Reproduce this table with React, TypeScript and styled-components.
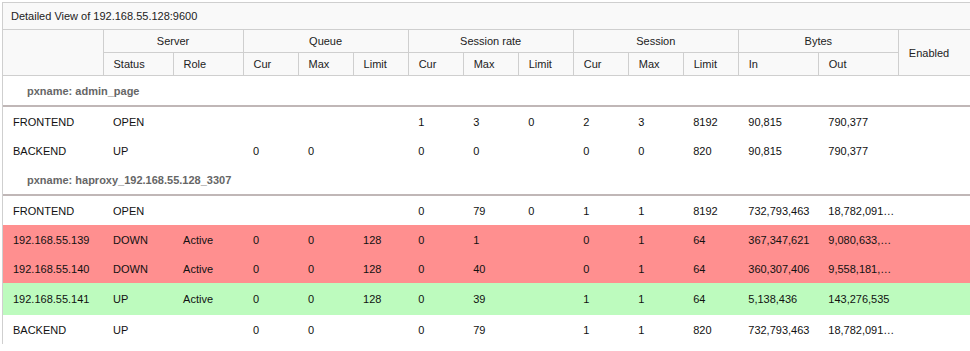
import styled, { createGlobalStyle } from "styled-components";

// page reset
const GlobalStyle = createGlobalStyle`
  html, body {
    margin: 0;
    padding: 0;
    background: #ffffff;
    overflow: hidden;
  }
  body {
    padding: 2px 0 0 2px;
    font-family: "Liberation Sans", Arial, sans-serif;
    font-size: 11px;
    color: #222;
  }
`;

type Status = "plain" | "down" | "up";

interface ServerRow {
  name: string;
  status: string;
  role: string;
  values: string[];
  state: Status;
}

interface Proxy {
  name: string;
  rows: ServerRow[];
}

// data shown in the stats table
const PROXIES: Proxy[] = [
  {
    name: "admin_page",
    rows: [
      { name: "FRONTEND", status: "OPEN", role: "", state: "plain",
        values: ["", "", "", "1", "3", "0", "2", "3", "8192", "90,815", "790,377"] },
      { name: "BACKEND", status: "UP", role: "", state: "plain",
        values: ["0", "0", "", "0", "0", "", "0", "0", "820", "90,815", "790,377"] },
    ],
  },
  {
    name: "haproxy_192.168.55.128_3307",
    rows: [
      { name: "FRONTEND", status: "OPEN", role: "", state: "plain",
        values: ["", "", "", "0", "79", "0", "1", "1", "8192", "732,793,463", "18,782,091,300"] },
      { name: "192.168.55.139", status: "DOWN", role: "Active", state: "down",
        values: ["0", "0", "128", "0", "1", "", "0", "1", "64", "367,347,621", "9,080,633,400"] },
      { name: "192.168.55.140", status: "DOWN", role: "Active", state: "down",
        values: ["0", "0", "128", "0", "40", "", "0", "1", "64", "360,307,406", "9,558,181,365"] },
      { name: "192.168.55.141", status: "UP", role: "Active", state: "up",
        values: ["0", "0", "128", "0", "39", "", "1", "1", "64", "5,138,436", "143,276,535"] },
      { name: "BACKEND", status: "UP", role: "", state: "plain",
        values: ["0", "0", "", "0", "79", "", "1", "1", "820", "732,793,463", "18,782,091,300"] },
    ],
  },
];

const COLUMN_WIDTHS = [100, 70, 70, 55, 55, 55, 55, 55, 55, 55, 55, 55, 80, 80, 75];

const ROW_COLORS: Record<Status, string> = {
  plain: "transparent",
  down: "#ff8f8f",
  up: "#bdfbbe",
};

const App = () => {
  return (
    <>
      <GlobalStyle />
      <Panel>
        <TitleBar>Detailed View of 192.168.55.128:9600</TitleBar>
        <Table>
          <colgroup>
            {COLUMN_WIDTHS.map((w, i) => (
              <col key={i} style={{ width: w }} />
            ))}
          </colgroup>
          <thead>
            <tr>
              <GroupTh rowSpan={2} />
              <GroupTh colSpan={2}>Server</GroupTh>
              <GroupTh colSpan={3}>Queue</GroupTh>
              <GroupTh colSpan={3}>Session rate</GroupTh>
              <GroupTh colSpan={3}>Session</GroupTh>
              <GroupTh colSpan={2}>Bytes</GroupTh>
              <SubTh rowSpan={2}>Enabled</SubTh>
            </tr>
            <tr>
              <SubTh>Status</SubTh>
              <SubTh>Role</SubTh>
              <SubTh>Cur</SubTh>
              <SubTh>Max</SubTh>
              <SubTh>Limit</SubTh>
              <SubTh>Cur</SubTh>
              <SubTh>Max</SubTh>
              <SubTh>Limit</SubTh>
              <SubTh>Cur</SubTh>
              <SubTh>Max</SubTh>
              <SubTh>Limit</SubTh>
              <SubTh>In</SubTh>
              <SubTh>Out</SubTh>
            </tr>
          </thead>
          {PROXIES.map((proxy) => (
            <tbody key={proxy.name}>
              <GroupRow>
                <GroupCell colSpan={15}>pxname: {proxy.name}</GroupCell>
              </GroupRow>
              {proxy.rows.map((row, i) => (
                <DataRow key={i} $state={row.state}>
                  <Cell>{row.name}</Cell>
                  <Cell>{row.status}</Cell>
                  <Cell>{row.role}</Cell>
                  {row.values.map((v, j) => (
                    <Cell key={j}>{v}</Cell>
                  ))}
                  <Cell />
                </DataRow>
              ))}
            </tbody>
          ))}
        </Table>
      </Panel>
    </>
  );
};

const Panel = styled.div`
  width: 972px;
  border-left: 1px solid #cfcfcf;
  border-top: 1px solid #cfcfcf;
`;

const TitleBar = styled.div`
  height: 26px;
  line-height: 26px;
  padding-left: 8px;
  background: #f9f9f9;
  color: #222;
`;

const Table = styled.table`
  width: 971px;
  table-layout: fixed;
  border-collapse: collapse;
`;

const GroupTh = styled.th`
  height: 22px;
  padding: 0 10px;
  background: #f9f9f9;
  border: 1px solid #cfcfcf;
  font-weight: normal;
  text-align: center;
  color: #222;
  &:first-child {
    border-left: none;
  }
`;

const SubTh = styled.th`
  height: 22px;
  padding: 0 10px;
  background: #f9f9f9;
  border: 1px solid #cfcfcf;
  font-weight: normal;
  text-align: left;
  color: #222;
`;

const GroupRow = styled.tr`
  border-bottom: 2px solid #c0b7b7;
`;

const GroupCell = styled.td`
  height: 29px;
  padding: 0 0 0 24px;
  font-weight: bold;
  color: #666;
`;

const DataRow = styled.tr<{ $state: Status }>`
  background: ${({ $state }) => ROW_COLORS[$state]};
  td {
    height: ${({ $state }) => ($state === "up" ? 32 : 29)}px;
  }
`;

const Cell = styled.td`
  padding: 0 3px 0 10px;
  color: #111;
  white-space: nowrap;
  overflow: hidden;
  text-overflow: ellipsis;
`;

export default App;
